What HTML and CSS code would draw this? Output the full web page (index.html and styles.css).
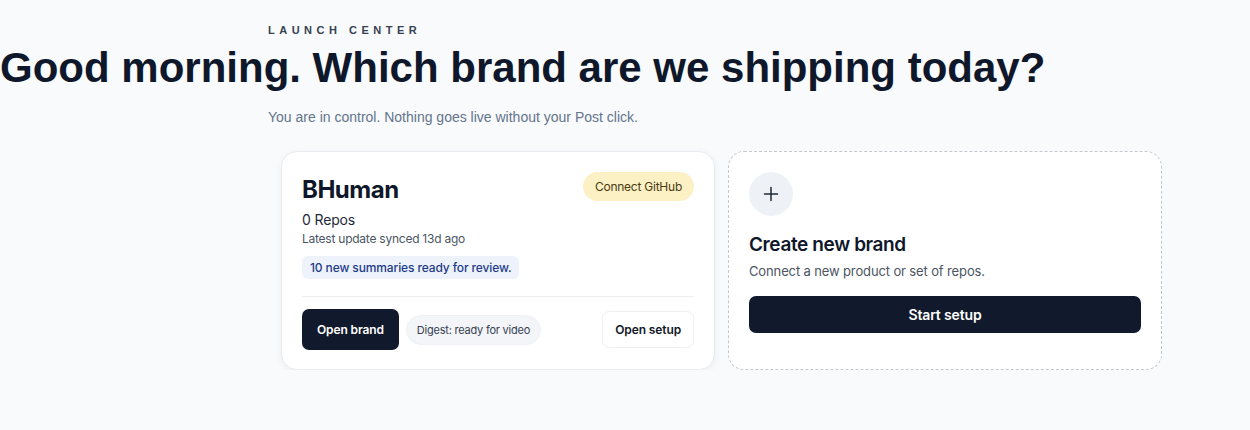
FILE: index.html
```html
<!DOCTYPE html>
<html lang="en">
<head>
    <meta charset="UTF-8">
    <meta name="viewport" content="width=device-width, initial-scale=1.0">
    <title>Launch Center</title>
    <link rel="stylesheet" href="styles.css">
</head>
<body>
    <div class="page">
        <!-- Header -->
        <p class="eyebrow">LAUNCH CENTER</p>
        <h1>Good morning. Which brand are we shipping today?</h1>
        <p class="lede">You are in control. Nothing goes live without your Post click.</p>

        <!-- Brands -->
        <div class="brands">
            <div class="card">
                <div class="card-top">
                    <div>
                        <h2>BHuman</h2>
                        <p class="repos">0 Repos</p>
                        <p class="synced">Latest update synced 13d ago</p>
                    </div>
                    <button class="pill pill-warn">Connect GitHub</button>
                </div>
                <span class="notice">10 new summaries ready for review.</span>
                <div class="card-actions">
                    <button class="btn btn-dark">Open brand</button>
                    <span class="pill pill-muted">Digest: ready for video</span>
                    <button class="btn btn-light">Open setup</button>
                </div>
            </div>

            <div class="card card-new">
                <div class="plus">
                    <svg width="16" height="16" viewBox="0 0 16 16" fill="none" stroke="#1f2937" stroke-width="1.5" stroke-linecap="round">
                        <path d="M8 1.5v13M1.5 8h13"/>
                    </svg>
                </div>
                <h3>Create new brand</h3>
                <p class="hint">Connect a new product or set of repos.</p>
                <button class="btn btn-dark btn-wide">Start setup</button>
            </div>
        </div>
    </div>
</body>
</html>
```

FILE: styles.css
```css
/* styles.css */
* {
    margin: 0;
    padding: 0;
    box-sizing: border-box;
}

body {
    font-family: "Liberation Sans", Arial, sans-serif;
    background-color: #f8fafc;
    color: #0f172a;
}

.page {
    padding-top: 24px;
}

.eyebrow {
    margin-left: 268px;
    font-size: 11px;
    font-weight: 700;
    letter-spacing: 4.5px;
    color: #374151;
    line-height: 13px;
}

h1 {
    font-size: 42px;
    font-weight: 700;
    line-height: 50px;
    margin-top: 6px;
    color: #0f172a;
}

.lede {
    margin-left: 268px;
    margin-top: 16px;
    font-size: 14px;
    color: #64748b;
}

.brands {
    display: grid;
    grid-template-columns: 434px 434px;
    gap: 13px;
    margin-left: 281px;
    margin-top: 26px;
    font-family: Inter, "Noto Sans", sans-serif;
}

.card {
    background-color: white;
    border: 1px solid #e8ecf2;
    border-radius: 16px;
    box-shadow: 0 2px 8px rgba(15, 23, 42, 0.05);
    padding: 20px;
    height: 219px;
}

.card-top {
    display: flex;
    justify-content: space-between;
    align-items: flex-start;
}

h2 {
    font-size: 24px;
    font-weight: 700;
    letter-spacing: -0.02em;
    line-height: 32px;
    margin-top: 2px;
}

.repos {
    font-size: 14px;
    color: #1f2937;
    margin-top: 5px;
    letter-spacing: -0.01em;
}

.synced {
    font-size: 12px;
    color: #4b5563;
    margin-top: 3px;
    letter-spacing: -0.02em;
}

.pill {
    border: none;
    border-radius: 999px;
    font-family: inherit;
    font-size: 12px;
    letter-spacing: -0.02em;
}

.pill-warn {
    background-color: #fcf1c4;
    color: #4a3a12;
    padding: 7px 12px;
}

.pill-muted {
    background-color: #f3f5f8;
    color: #374151;
    font-size: 11px;
    padding: 7px 10px;
    border: 1px solid #eef1f5;
}

.notice {
    display: inline-block;
    margin-top: 10px;
    background-color: #eef3fb;
    color: #1e3a8a;
    font-size: 12px;
    font-weight: 500;
    padding: 4px 8px;
    border-radius: 6px;
    letter-spacing: -0.01em;
}

.card-actions {
    display: flex;
    align-items: center;
    gap: 7px;
    border-top: 1px solid #eceff3;
    margin-top: 17px;
    padding-top: 12px;
}

.btn {
    font-family: inherit;
    font-size: 12px;
    font-weight: 600;
    border-radius: 7px;
    cursor: pointer;
    letter-spacing: -0.01em;
}

.btn-dark {
    background-color: #111a2c;
    color: white;
    border: none;
    padding: 13px 15px;
}

.btn-light {
    margin-left: auto;
    background-color: white;
    color: #111827;
    border: 1px solid #edf0f4;
    padding: 10px 12px;
}

.card-new {
    border: 1.5px dashed #c3c8d0;
    box-shadow: none;
}

.plus {
    width: 44px;
    height: 44px;
    border-radius: 50%;
    background-color: #eef1f6;
    display: flex;
    justify-content: center;
    align-items: center;
}

h3 {
    font-size: 19px;
    font-weight: 600;
    letter-spacing: -0.02em;
    margin-top: 17px;
    line-height: 24px;
}

.hint {
    font-size: 13px;
    color: #4b5563;
    margin-top: 6px;
    letter-spacing: -0.01em;
}

.btn-wide {
    width: 100%;
    margin-top: 17px;
    padding: 10px;
    font-size: 14px;
}
```
